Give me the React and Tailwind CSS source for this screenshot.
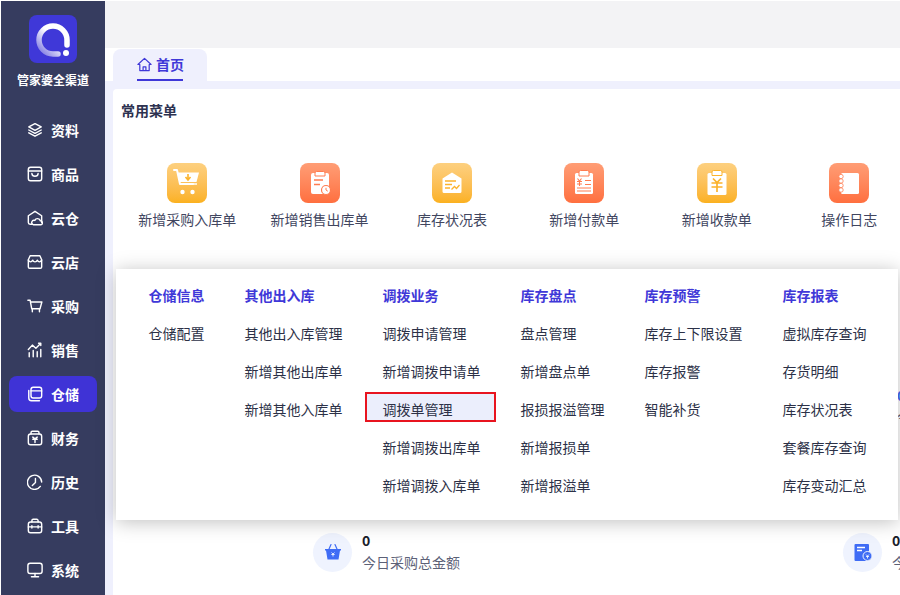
import React from "react";

const sw = { fill: "none", stroke: "currentColor", strokeWidth: 1.6, strokeLinecap: "round", strokeLinejoin: "round" };

// sidebar line icons, all on an 18 box
const navIcons = {
  layers: (
    <>
      <path d="M9 1.800 16 5.600 9 9.400 2 5.600Z" />
      <path d="M2 9 9 12.800 16 9" />
      <path d="M2 12.200 9 16 16 12.200" />
    </>
  ),
  bag: (
    <>
      <rect x="1.500" y="1.500" width="15" height="15" rx="2.500" />
      <path d="M1.500 5.600h15" />
      <path d="M5.500 8.500c.4 4 6.600 4 7 0" />
    </>
  ),
  cloudHouse: (
    <>
      <path d="M6 16H3.500a2 2 0 0 1-2-2V6.500L9 1.500l7.500 5V14" />
      <path d="M7 16.500h9a2.300 2.300 0 0 0-1-4.400 3.300 3.300 0 0 0-6.200-.4A2.500 2.500 0 0 0 7 16.500Z" />
    </>
  ),
  store: (
    <>
      <path d="M3.500 2h11l2 4.500v8a1.500 1.500 0 0 1-1.500 1.500H3a1.500 1.500 0 0 1-1.500-1.500v-8Z" />
      <path d="M1.500 7c1.500 2.500 3.500 2.500 5 0 1 2.500 4 2.500 5 0 1.500 2.500 3.500 2.500 5 0" />
    </>
  ),
  cart: (
    <>
      <path d="M1 2.500h2.500l1.800 9.500h9.400l2-7.500H4" />
      <path d="M6 12v3.500M14 12v3.500" />
    </>
  ),
  chart: (
    <>
      <path d="M1.500 8.500 6 3.500l4 3.500 5-5" />
      <path d="M13 1.500h2.500V4" />
      <path d="M2.500 12v4.500M7 9.500v7M11.500 11v5.500M15.500 8.500v8" />
    </>
  ),
  box: (
    <>
      <rect x="4.500" y="1.500" width="12" height="12" rx="2.500" />
      <path d="M2 5v8.500a3 3 0 0 0 3 3h9" />
      <path d="M4.500 5.500h12" />
    </>
  ),
  money: (
    <>
      <path d="M4.500 4.500V3a1.500 1.500 0 0 1 1.500-1.500h6A1.500 1.500 0 0 1 13.500 3v1.500" />
      <rect x="1.500" y="4.500" width="15" height="12" rx="2.500" />
      <path d="M6.500 8 9 10l2.500-2M6.500 10.500h5M9 10v4" />
    </>
  ),
  clock: (
    <>
      <path d="M15 14a8 8 0 1 1 1.500-5" />
      <path d="M9.500 5v4.500L6 13" />
    </>
  ),
  toolbox: (
    <>
      <path d="M5.500 4.500V3A1.500 1.500 0 0 1 7 1.500h4A1.500 1.500 0 0 1 12.500 3v1.500" />
      <rect x="1.500" y="4.500" width="15" height="12" rx="2.500" />
      <path d="M1.500 10h15M5.500 8.800v2.400M12.500 8.800v2.400" />
    </>
  ),
  monitor: (
    <>
      <rect x="1" y="1.500" width="16" height="11.500" rx="2.500" />
      <path d="M5 16.500h8M9 13v3.500" />
    </>
  ),
};

const navItems = [
  { label: "资料", icon: "layers" },
  { label: "商品", icon: "bag" },
  { label: "云仓", icon: "cloudHouse" },
  { label: "云店", icon: "store" },
  { label: "采购", icon: "cart" },
  { label: "销售", icon: "chart" },
  { label: "仓储", icon: "box", active: true },
  { label: "财务", icon: "money" },
  { label: "历史", icon: "clock" },
  { label: "工具", icon: "toolbox" },
  { label: "系统", icon: "monitor" },
];

const tileIcons = {
  cart: (
    <>
      <path d="M7 7h3l3 14h13" fill="none" stroke="#fff" strokeWidth="2" strokeLinecap="round" strokeLinejoin="round" />
      <path d="M10.500 9.500H32l-2.500 9.500H12.500Z" fill="#fff" />
      <path d="M21 11v5M18.500 14l2.500 3 2.500-3" fill="none" stroke="#fbb32c" strokeWidth="1.600" />
      <path d="M13 21h17" stroke="#fff" strokeWidth="1.600" />
      <circle cx="15.500" cy="29" r="2.200" fill="#fff" />
      <circle cx="25.500" cy="29" r="2.200" fill="#fff" />
    </>
  ),
  clipboard: (
    <>
      <rect x="11" y="10" width="18" height="21" rx="2" fill="#fff" />
      <path d="M15 10a1.500 1.500 0 0 1 1.500-1.500h7A1.500 1.500 0 0 1 25 10v3H15Z" fill="#fff" stroke="#ff7c50" strokeWidth="1" />
      <path d="M14 17h9M14 21.500h6" stroke="#ff7c50" strokeWidth="1.600" />
      <circle cx="26" cy="27" r="4.500" fill="#fff" stroke="#ff7c50" strokeWidth="1.200" />
      <path d="M26 24.800V27l1.800 1.200" fill="none" stroke="#ff7c50" strokeWidth="1" />
    </>
  ),
  mail: (
    <>
      <path d="M10.500 15.500 20 9.500l9.500 6v13a1.500 1.500 0 0 1-1.500 1.500H12a1.500 1.500 0 0 1-1.500-1.500Z" fill="#fff" />
      <path d="M13 18h11M13 21.500h7M13 25h5" stroke="#fbb32c" strokeWidth="1.300" />
      <path d="M19.500 26.500l3-3 2 2 3-3.500" fill="none" stroke="#fbb32c" strokeWidth="1.300" />
    </>
  ),
  ledger: (
    <>
      <rect x="11" y="10" width="18" height="21" rx="1.500" fill="#fff" />
      <path d="M15 9a1.500 1.500 0 0 1 1.500-1.500h7A1.500 1.500 0 0 1 25 9v4H15Z" fill="#fff" stroke="#ff7c50" strokeWidth="1" />
      <path d="M13.500 15.500 15.500 18l2-2.500M13 18.500h5M13 21h5M15.500 18v5M21 17.500h6M21 21.500h6M13 25h14M13 28h14" fill="none" stroke="#ff7c50" strokeWidth="1.100" />
    </>
  ),
  receipt: (
    <>
      <rect x="10.500" y="10" width="19" height="22" rx="1.500" fill="#fff" />
      <path d="M15 9a1.500 1.500 0 0 1 1.500-1.500h7A1.500 1.500 0 0 1 25 9v3.500H15Z" fill="#fff" stroke="#fbb32c" strokeWidth="1" />
      <path d="M16 15.500l4 4 4-4M14.500 20h11M14.500 24h11M20 19.500V29" fill="none" stroke="#fbb32c" strokeWidth="1.700" />
    </>
  ),
  notebook: (
    <>
      <rect x="12" y="10" width="18" height="21" rx="1.500" fill="#fff" />
      <circle cx="12" cy="13.500" r="2.200" fill="#fff" stroke="#ff7c50" strokeWidth=".8" />
      <circle cx="12" cy="18" r="2.200" fill="#fff" stroke="#ff7c50" strokeWidth=".8" />
      <circle cx="12" cy="22.500" r="2.200" fill="#fff" stroke="#ff7c50" strokeWidth=".8" />
      <circle cx="12" cy="27" r="2.200" fill="#fff" stroke="#ff7c50" strokeWidth=".8" />
    </>
  ),
};

const shortcuts = [
  { label: "新增采购入库单", icon: "cart", tone: "y" },
  { label: "新增销售出库单", icon: "clipboard", tone: "r" },
  { label: "库存状况表", icon: "mail", tone: "y" },
  { label: "新增付款单", icon: "ledger", tone: "r" },
  { label: "新增收款单", icon: "receipt", tone: "y" },
  { label: "操作日志", icon: "notebook", tone: "r" },
];

const menuColumns = [
  { title: "仓储信息", links: ["仓储配置"] },
  { title: "其他出入库", links: ["其他出入库管理", "新增其他出库单", "新增其他入库单"] },
  { title: "调拨业务", links: ["调拨申请管理", "新增调拨申请单", "调拨单管理", "新增调拨出库单", "新增调拨入库单"] },
  { title: "库存盘点", links: ["盘点管理", "新增盘点单", "报损报溢管理", "新增报损单", "新增报溢单"] },
  { title: "库存预警", links: ["库存上下限设置", "库存报警", "智能补货"] },
  { title: "库存报表", links: ["虚拟库存查询", "存货明细", "库存状况表", "套餐库存查询", "库存变动汇总"] },
];

function Sidebar() {
  return (
    <aside className="w-[104px] shrink-0 bg-[#363c5f] flex flex-col">
      <div className="h-[111px] pt-[14px] flex flex-col items-center">
        <div className="w-12 h-12 rounded-lg bg-[#3f38d8]">
          <svg width="48" height="48" viewBox="0 0 48 48">
            <defs>
              <linearGradient id="ring" x1="0" y1="1" x2="1" y2="0">
                <stop offset="0.1" stopColor="#8f8be6" />
                <stop offset="0.55" stopColor="#ffffff" />
              </linearGradient>
            </defs>
            <path d="M29 39H24A14 14 0 1 1 38 25V30" fill="none" stroke="url(#ring)" strokeWidth="5.500" strokeLinecap="round" />
            <circle cx="37" cy="38" r="3" fill="#fff" />
          </svg>
        </div>
        <div className="mt-[9px] text-xs font-bold text-white leading-4">管家婆全渠道</div>
      </div>
      <nav className="flex flex-col gap-2 px-2">
        {navItems.map((item) => (
          <div
            key={item.label}
            className={`h-9 rounded-lg flex items-center gap-2 pl-[18px] text-white ${item.active ? "bg-[#3f33d6]" : ""}`}
          >
            <svg width="16" height="16" viewBox="0 0 18 18" {...sw}>
              {navIcons[item.icon]}
            </svg>
            <span className="text-sm font-bold leading-5">{item.label}</span>
          </div>
        ))}
      </nav>
    </aside>
  );
}

function Shortcut({ item }) {
  const tone =
    item.tone === "y"
      ? "from-[#fdd07f] to-[#fbb11e]"
      : "from-[#ff9d75] to-[#ff6f3f]";
  return (
    <div className="w-[132.4px] shrink-0 flex flex-col items-center">
      <div className={`w-10 h-10 rounded-lg bg-linear-to-b ${tone}`}>
        <svg width="40" height="40" viewBox="0 0 40 40">
          {tileIcons[item.icon]}
        </svg>
      </div>
      <div className="mt-[5px] text-sm leading-[22px] text-[#41465f] whitespace-nowrap">{item.label}</div>
    </div>
  );
}

function Stat({ icon, label, value }) {
  return (
    <div className="flex items-center gap-[10px] shrink-0">
      <div className="w-[39px] h-[39px] rounded-full bg-[#eff3fe] flex items-center justify-center">{icon}</div>
      <div className="whitespace-nowrap">
        <div className="text-sm font-bold leading-4 text-[#1a1d2b]">{value}</div>
        <div className="mt-1 text-sm leading-5 text-[#5c6177]">{label}</div>
      </div>
    </div>
  );
}

const basketIcon = (
  <svg width="18" height="18" viewBox="0 0 18 18">
    <path d="M5 6 7 1.500M13 6l-2-4.500" fill="none" stroke="#3f6cf5" strokeWidth="1.200" strokeLinecap="round" />
    <path d="M1 6h16v1.500h-1L14.500 16.500h-11L2 7.500H1Z" fill="#3f6cf5" />
    <path d="M7.500 9.500 9 11l1.500-1.500M7.300 11.500h3.400M9 11v2.500" fill="none" stroke="#fff" strokeWidth=".8" />
  </svg>
);

const billIcon = (
  <svg width="20" height="20" viewBox="0 0 20 20">
    <rect x="1.500" y="2" width="14.500" height="17" rx="1" fill="#3f6cf5" />
    <path d="M4 5.500h8M4 8.500h5" stroke="#fff" strokeWidth="1.300" />
    <circle cx="14.500" cy="14" r="4.500" fill="#3f6cf5" stroke="#eff3fe" strokeWidth="1" />
    <path d="M13 12.500l1.500 1.500 1.500-1.500M13 14.500h3M14.500 14v2.500" fill="none" stroke="#fff" strokeWidth=".8" />
  </svg>
);

function FlyoutMenu() {
  return (
    <div className="absolute left-[116px] top-[269px] w-[782px] h-[251px] bg-white shadow-[0_2px_18px_rgba(0,0,0,0.25)] pl-[32.5px] pt-4 flex gap-10 z-10">
      {menuColumns.map((col) => (
        <div key={col.title} className="flex flex-col whitespace-nowrap">
          <div className="h-5 text-sm font-bold leading-5 text-[#3f38d8]">{col.title}</div>
          <div className="mt-[9px] flex flex-col">
            {col.links.map((link) => (
              <div key={link} className="relative h-[38px] flex items-center text-sm text-[#2c3147]">
                {link === "调拨单管理" && (
                  <div className="absolute -left-[17.5px] -right-[15.5px] top-[2px] bottom-[6px] bg-[#ebeefc] border-2 border-[#e8141f]" />
                )}
                <span className="relative">{link}</span>
              </div>
            ))}
          </div>
        </div>
      ))}
    </div>
  );
}

export default function App() {
  return (
    <div
      className="relative w-[900px] h-[595px] overflow-hidden bg-white pt-px pl-px flex"
      style={{ fontFamily: '"Noto Sans CJK SC", "Noto Sans", sans-serif' }}
    >
      <Sidebar />
      <main className="flex-1 min-w-0 flex flex-col">
        <div className="h-[47px] shrink-0 bg-[#f3f3f5]" />
        <div className="h-[33px] shrink-0 pl-2 pt-px bg-white">
          <div className="relative w-[94px] h-8 rounded-t-lg bg-[#eff0fd] flex items-center gap-1 pl-6 pb-[2px] text-[#3f38d8]">
            <svg width="15" height="15" viewBox="0 0 16 16" fill="none" stroke="currentColor" strokeWidth="1.300" strokeLinejoin="round">
              <path d="M8 1.500 1 8h2v6.500h10V8h2Z" />
              <path d="M6.500 14.500v-4h3v4" />
            </svg>
            <span className="text-sm font-bold leading-5">首页</span>
            <div className="absolute left-6 bottom-0 w-[46px] h-0.5 bg-[#3f38d8]" />
          </div>
        </div>
        <div className="flex-1 min-h-0 bg-[#eff0fd] pl-2 pt-2">
          <div className="h-full bg-white rounded-tl overflow-hidden">
            <div className="pl-2 pt-[11px] text-sm font-bold leading-5 text-[#2d3250]">常用菜单</div>
            <div className="mt-[43px] pl-2 flex">
              {shortcuts.map((item) => (
                <Shortcut key={item.label} item={item} />
              ))}
            </div>
            {/* row behind the flyout, only its first pixels show at the right edge */}
            <div className="mt-[155px] pl-[784px] whitespace-nowrap">
              <div className="text-sm font-bold leading-5 text-[#3f6cf5]">0</div>
              <div className="mt-px text-sm leading-5 text-[#5c6177]">今日销售</div>
            </div>
            <div className="mt-[106px] pl-[200px] flex gap-[383px]">
              <Stat icon={basketIcon} value="0" label="今日采购总金额" />
              <Stat icon={billIcon} value="0" label="今日付款总金额" />
            </div>
          </div>
        </div>
      </main>
      <FlyoutMenu />
    </div>
  );
}
